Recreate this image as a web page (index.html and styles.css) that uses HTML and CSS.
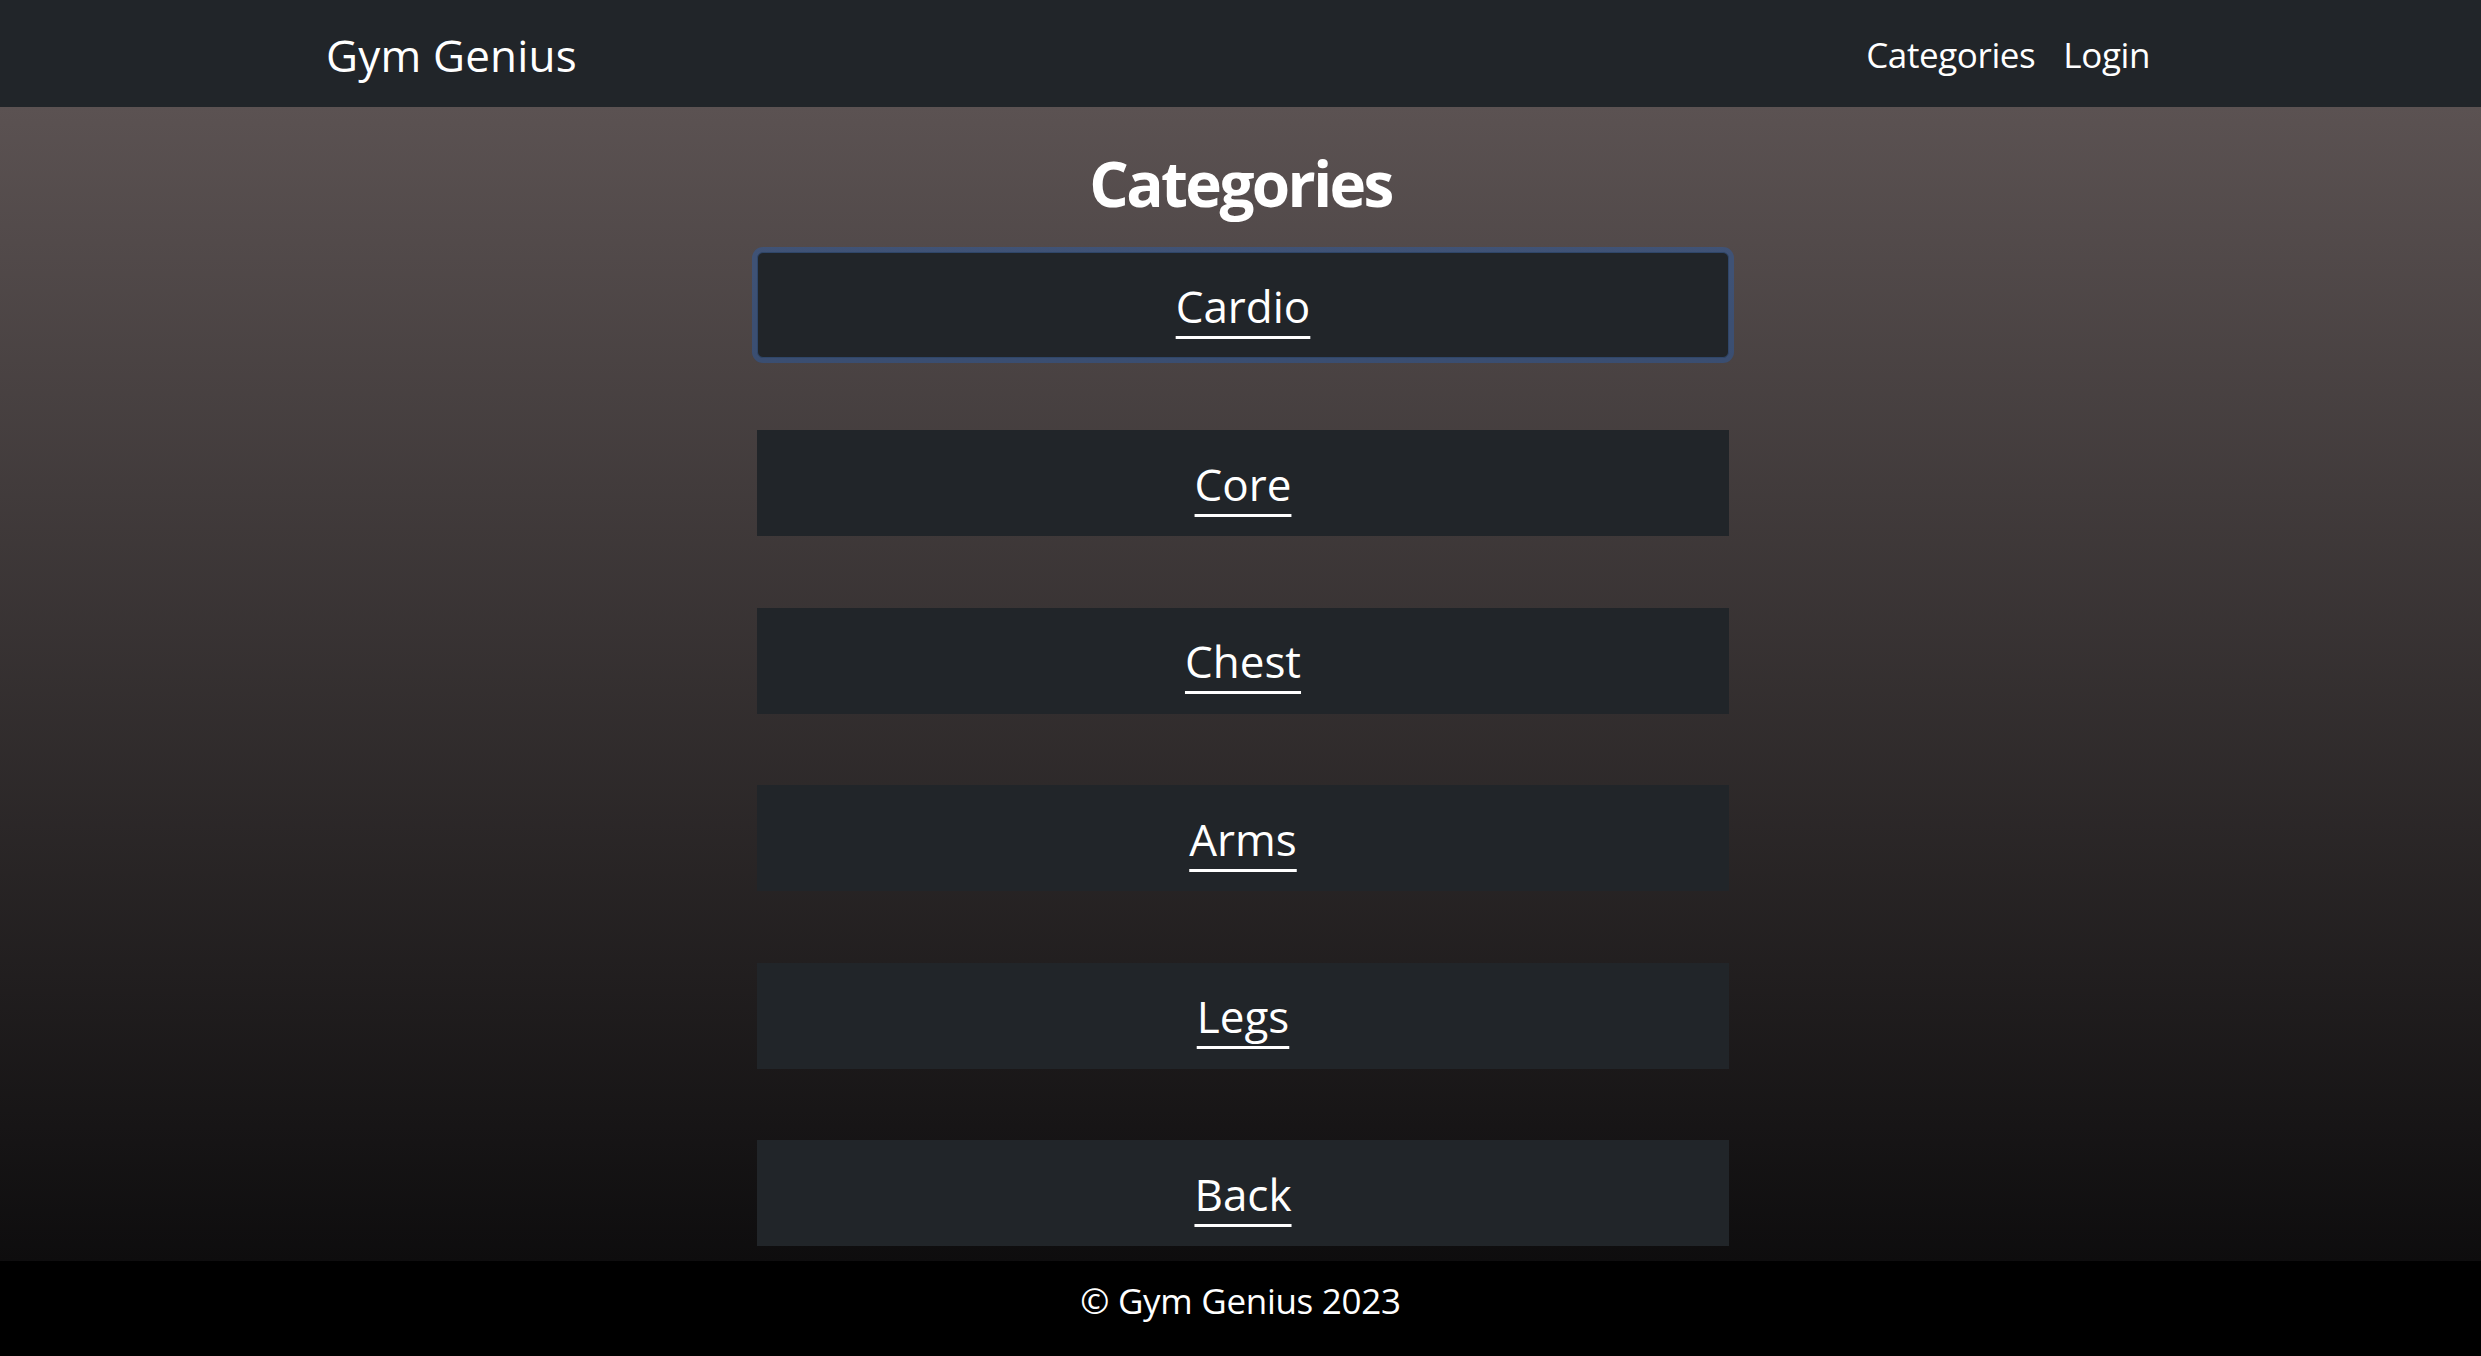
FILE: index.html
```html
<!DOCTYPE html>
<html lang="en">
<head>
<meta charset="utf-8">
<title>Gym Genius - Categories</title>
<link rel="stylesheet" href="styles.css">
</head>
<body>
<div class="page">
  <nav class="navbar">
    <div class="nav-inner">
      <a class="brand" href="#">Gym Genius</a>
      <ul class="nav-links">
        <li><a href="#">Categories</a></li>
        <li><a href="#">Login</a></li>
      </ul>
    </div>
  </nav>
  <main class="main">
    <h1 class="title">Categories</h1>
    <div class="cat-list">
      <a class="cat-btn focused" href="#">Cardio</a>
      <a class="cat-btn" href="#">Core</a>
      <a class="cat-btn" href="#">Chest</a>
      <a class="cat-btn" href="#">Arms</a>
      <a class="cat-btn" href="#">Legs</a>
      <a class="cat-btn" href="#">Back</a>
    </div>
  </main>
  <footer class="footer">© Gym Genius 2023</footer>
</div>
</body>
</html>
```

FILE: styles.css
```css
* { box-sizing: border-box; }
html, body { margin: 0; padding: 0; }
body {
  font-family: "Open Sans", "Noto Sans", sans-serif;
  color: #fff;
  background: #000;
  line-height: 1.2;
}
a { color: #fff; }
.page {
  display: flex;
  flex-direction: column;
  min-height: 100vh;
}
.navbar {
  height: 107px;
  background: #212529;
  flex: none;
}
.nav-inner {
  height: 100%;
  display: flex;
  align-items: center;
  justify-content: space-between;
  padding: 0 331px 0 326px;
}
.brand {
  font-size: 44px;
  letter-spacing: 0.2px;
  text-decoration: none;
  padding-top: 3px;
}
.nav-links {
  list-style: none;
  margin: 0;
  padding: 3px 0 0;
  display: flex;
  gap: 28px;
}
.nav-links a {
  font-size: 35px;
  letter-spacing: -0.4px;
  text-decoration: none;
}
.main {
  flex: 1;
  background: linear-gradient(to bottom, #5b5252, #0e0d0e);
  padding: 39px 0 15px;
  display: flex;
  flex-direction: column;
  align-items: center;
}
.title {
  margin: 0 0 32px;
  font-size: 62px;
  font-weight: 700;
  letter-spacing: -2.6px;
  line-height: 1.2;
}
.cat-list {
  width: 972px;
  margin-left: 5px;
  display: flex;
  flex-direction: column;
  gap: 71.6px;
}
.cat-btn {
  height: 106px;
  background: #212529;
  display: flex;
  align-items: center;
  justify-content: center;
  font-size: 44px;
  text-decoration: underline;
  text-decoration-thickness: 3px;
  text-underline-offset: 13px;
  padding-top: 2px;
}
.cat-btn.focused {
  border-radius: 6px;
  border: 1px solid #2f4668;
  box-shadow: 0 0 0 5px rgba(13, 110, 253, 0.25);
}
.footer {
  height: 95px;
  flex: none;
  background: #000;
  text-align: center;
  font-size: 35px;
  letter-spacing: -0.3px;
  padding-top: 19px;
}
```
